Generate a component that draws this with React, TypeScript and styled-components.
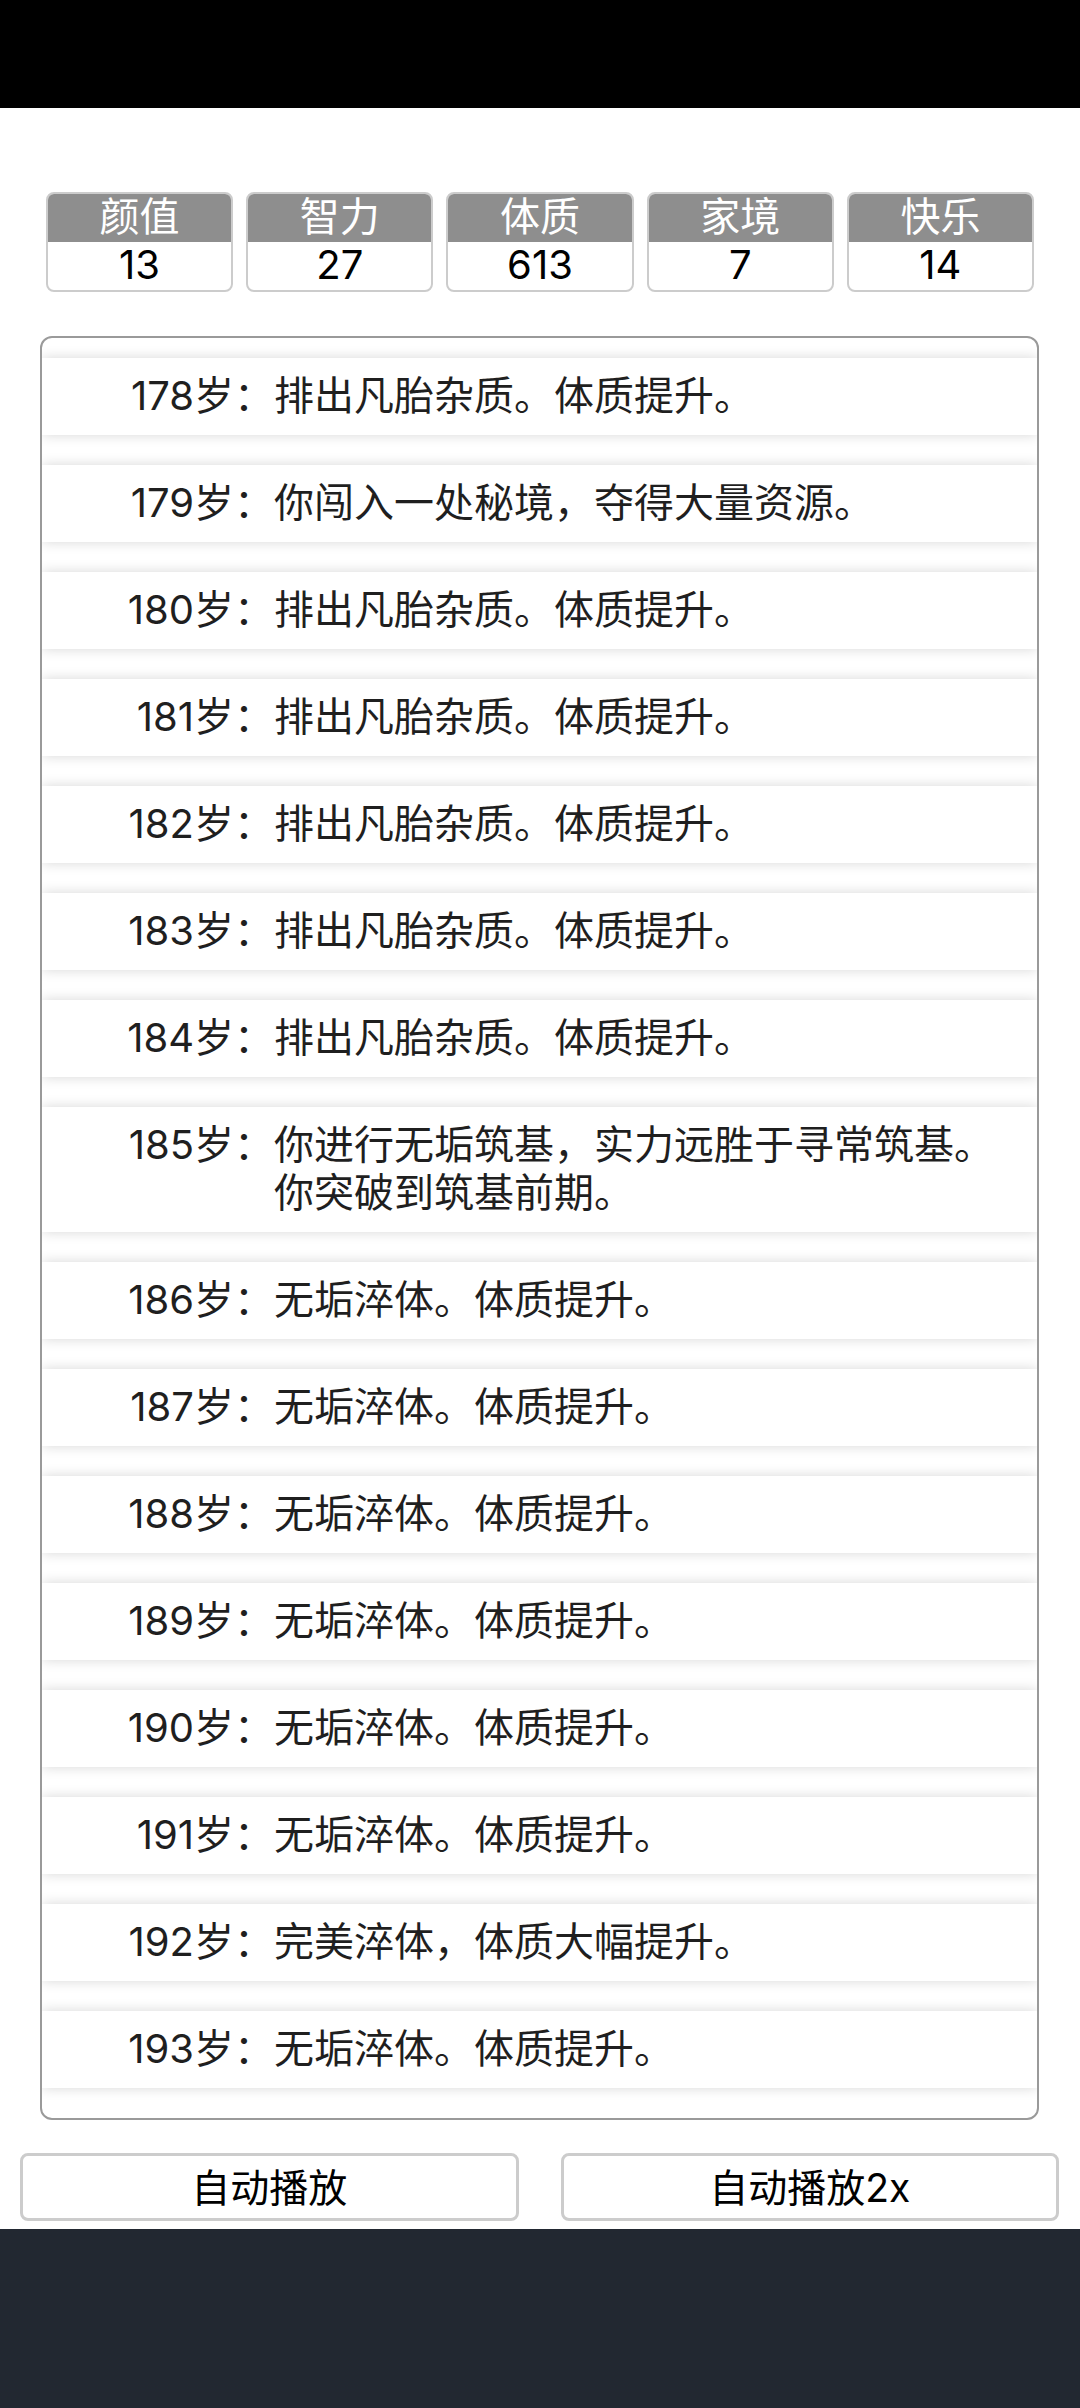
import styled, { createGlobalStyle } from 'styled-components';

type Stat = {
	label: string;
	value: number;
};

type Entry = {
	age: number;
	lines: string[];
};

const fontStack = `"Inter", "Noto Sans CJK SC", "Noto Sans", sans-serif`;

const GlobalStyle = createGlobalStyle`
	* {
		box-sizing: border-box;
	}

	body {
		margin: 0;
		background: #ffffff;
		font-family: ${fontStack};
	}
`;

const Page = styled.div`
	width: 1080px;
	min-height: 2408px;
	display: flex;
	flex-direction: column;
	background: #ffffff;
`;

const StatusBar = styled.div`
	height: 108px;
	background: #000000;
`;

const StatsRow = styled.div`
	display: grid;
	grid-template-columns: repeat(5, 1fr);
	gap: 13px;
	margin-top: 84px;
	padding: 0 46px;
`;

const StatBox = styled.div`
	height: 100px;
	border: 2px solid #cccccc;
	border-radius: 8px;
	overflow: hidden;
	display: flex;
	flex-direction: column;
`;

const StatLabel = styled.div`
	height: 48px;
	background: #8e8e8e;
	color: #ffffff;
	font-size: 40px;
	line-height: 46px;
	text-align: center;
`;

const StatValue = styled.div`
	height: 48px;
	color: #000000;
	font-size: 40px;
	line-height: 46px;
	text-align: center;
`;

const LogPanel = styled.div`
	margin: 44px 41px 0 40px;
	border: 2px solid #9a9a9a;
	border-radius: 12px;
	padding: 20px 0 30px;
	display: flex;
	flex-direction: column;
	gap: 30px;
	background: #ffffff;
	overflow: hidden;
`;

const LogRow = styled.div`
	display: flex;
	padding: 14px 0 15px;
	background: #ffffff;
	box-shadow: 0 0 12px rgba(0, 0, 0, 0.16);
	color: #1f1f1f;
	font-size: 40px;
	line-height: 48px;
`;

const AgeLabel = styled.div`
	width: 232px;
	height: 48px;
	flex-shrink: 0;
	text-align: right;
	white-space: nowrap;
`;

const EventText = styled.div`
	flex: 1;
	padding-right: 20px;
`;

const EventLine = styled.div`
	height: 48px;
`;

const ButtonRow = styled.div`
	display: grid;
	grid-template-columns: 1fr 1fr;
	gap: 42px;
	margin-top: 33px;
	padding: 0 21px 0 20px;
`;

const PlayButton = styled.button`
	height: 68px;
	border: 3px solid #cccccc;
	border-radius: 8px;
	background: #ffffff;
	color: #000000;
	font-family: ${fontStack};
	font-size: 39px;
	line-height: 1;
	padding: 0;
`;

const Footer = styled.div`
	margin-top: 8px;
	flex: 1;
	min-height: 180px;
	background: #222831;
`;

const stats: Stat[] = [
	{ label: '颜值', value: 13 },
	{ label: '智力', value: 27 },
	{ label: '体质', value: 613 },
	{ label: '家境', value: 7 },
	{ label: '快乐', value: 14 },
];

const entries: Entry[] = [
	{ age: 178, lines: ['排出凡胎杂质。体质提升。'] },
	{ age: 179, lines: ['你闯入一处秘境，夺得大量资源。'] },
	{ age: 180, lines: ['排出凡胎杂质。体质提升。'] },
	{ age: 181, lines: ['排出凡胎杂质。体质提升。'] },
	{ age: 182, lines: ['排出凡胎杂质。体质提升。'] },
	{ age: 183, lines: ['排出凡胎杂质。体质提升。'] },
	{ age: 184, lines: ['排出凡胎杂质。体质提升。'] },
	{ age: 185, lines: ['你进行无垢筑基，实力远胜于寻常筑基。', '你突破到筑基前期。'] },
	{ age: 186, lines: ['无垢淬体。体质提升。'] },
	{ age: 187, lines: ['无垢淬体。体质提升。'] },
	{ age: 188, lines: ['无垢淬体。体质提升。'] },
	{ age: 189, lines: ['无垢淬体。体质提升。'] },
	{ age: 190, lines: ['无垢淬体。体质提升。'] },
	{ age: 191, lines: ['无垢淬体。体质提升。'] },
	{ age: 192, lines: ['完美淬体，体质大幅提升。'] },
	{ age: 193, lines: ['无垢淬体。体质提升。'] },
];

const App = () => {
	return (
		<>
			<GlobalStyle />
			<Page>
				<StatusBar />
				<StatsRow>
					{stats.map((stat) => (
						<StatBox key={stat.label}>
							<StatLabel>{stat.label}</StatLabel>
							<StatValue>{stat.value}</StatValue>
						</StatBox>
					))}
				</StatsRow>
				<LogPanel>
					{entries.map((entry) => (
						<LogRow key={entry.age}>
							<AgeLabel>{entry.age}岁：</AgeLabel>
							<EventText>
								{entry.lines.map((line, i) => (
									<EventLine key={i}>{line}</EventLine>
								))}
							</EventText>
						</LogRow>
					))}
				</LogPanel>
				<ButtonRow>
					<PlayButton>自动播放</PlayButton>
					<PlayButton>自动播放2x</PlayButton>
				</ButtonRow>
				<Footer />
			</Page>
		</>
	);
};

export default App;
